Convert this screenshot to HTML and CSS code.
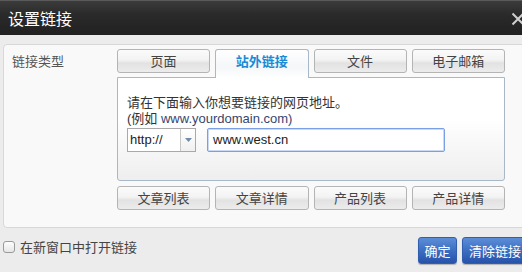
FILE: index.html
```html
<!DOCTYPE html>
<html lang="zh">
<head>
<meta charset="utf-8">
<link rel="stylesheet" href="styles.css">
</head>
<body>
<div class="dialog">
  <div class="titlebar">
    <span class="title">设置链接</span>
    <svg class="close" width="14" height="14" viewBox="0 0 14 14"><path d="M1.5 1.5 L12.5 12.5 M12.5 1.5 L1.5 12.5" stroke="#d0d0d0" stroke-width="2"/></svg>
  </div>
  <div class="main">
    <div class="panel">
      <div class="label">链接类型</div>
      <div class="area">
        <div class="tabs">
          <div class="tab">页面</div>
          <div class="tab active">站外链接</div>
          <div class="tab">文件</div>
          <div class="tab">电子邮箱</div>
        </div>
        <div class="content">
          <div class="line">请在下面输入你想要链接的网页地址。</div>
          <div class="line">(例如 <span class="url">www.yourdomain.com)</span></div>
          <div class="fields">
            <div class="select">
              <span class="sel-text">http://</span>
              <span class="sel-btn"><svg width="7" height="4" viewBox="0 0 7 4"><path d="M0 0 H7 L3.5 4 Z" fill="#6f8cad"/></svg></span>
            </div>
            <div class="input">www.west.cn</div>
          </div>
        </div>
        <div class="quick">
          <div class="btn">文章列表</div>
          <div class="btn">文章详情</div>
          <div class="btn">产品列表</div>
          <div class="btn">产品详情</div>
        </div>
      </div>
    </div>
    <div class="footer">
      <label class="check"><span class="box"></span>在新窗口中打开链接</label>
      <div class="actions">
        <div class="primary ok">确定</div>
        <div class="primary clear">清除链接</div>
      </div>
    </div>
  </div>
</div>
</body>
</html>
```
FILE: styles.css
```css
html, body {
  margin: 0;
  padding: 0;
}
body {
  width: 522px;
  height: 272px;
  overflow: hidden;
  background: #ececec;
  font-family: "Liberation Sans", Arial, "Noto Sans CJK SC", sans-serif;
  font-size: 13px;
  color: #444;
}
.dialog {
  width: 522px;
  height: 272px;
  display: flex;
  flex-direction: column;
}
.titlebar {
  height: 35px;
  flex: none;
  display: flex;
  align-items: center;
  justify-content: space-between;
  padding-left: 8px;
  background: linear-gradient(#3b3b3b, #2a2a2a 40%, #212121);
  border-top: 1px solid #5a5a5a;
  box-sizing: border-box;
}
.title {
  color: #fff;
  font-size: 16px;
  font-family: "Noto Sans CJK SC", sans-serif;
  line-height: 20px;
}
.close {
  margin-right: -3px;
  margin-top: 1px;
}
.main {
  flex: 1;
  display: flex;
  flex-direction: column;
  padding: 9px 0 0 3px;
}
.panel {
  height: 184px;
  box-sizing: border-box;
  margin-right: -10px;
  border: 1px solid #d8d8d8;
  border-radius: 4px;
  background: #f9f9f9;
  display: flex;
  padding: 4px 0 0 8px;
}
.label {
  width: 105px;
  padding-top: 4px;
  line-height: 16px;
  font-family: "Noto Sans CJK SC", sans-serif;
  color: #555;
}
.area {
  width: 388px;
  display: flex;
  flex-direction: column;
}
.tabs {
  height: 28px;
  display: flex;
  gap: 5px;
  align-items: flex-start;
}
.tab, .btn {
  flex: 1;
  height: 24px;
  box-sizing: border-box;
  border: 1px solid #b4b4b4;
  border-radius: 3px;
  background: linear-gradient(#fbfbfb, #f3f3f3 45%, #e2e2e2 60%, #ececec);
  text-align: center;
  line-height: 22px;
  font-family: "Noto Sans CJK SC", sans-serif;
  color: #444;
}
.tab.active {
  position: relative;
  z-index: 1;
  height: 29px;
  border-color: #a8b8c8;
  border-bottom: none;
  border-radius: 3px 3px 0 0;
  background: linear-gradient(#ffffff, #f4f6f8 60%, #ffffff);
  color: #1a8ad4;
  font-weight: bold;
}
.content {
  height: 104px;
  box-sizing: border-box;
  border: 1px solid #a8b8c8;
  border-radius: 0 0 3px 3px;
  background: linear-gradient(#ffffff 40%, #eeeeee);
  padding: 17px 0 0 9px;
}
.line {
  line-height: 16px;
  color: #333;
  font-family: "Liberation Sans", Arial, "Noto Sans CJK SC", sans-serif;
}
.url {
  color: #36466e;
}
.fields {
  display: flex;
  gap: 11px;
  margin-top: 1px;
}
.select {
  width: 69px;
  height: 24px;
  box-sizing: border-box;
  border: 1px solid #a9a9a9;
  background: #fff;
  display: flex;
}
.sel-text {
  flex: 1;
  padding-left: 2px;
  line-height: 22px;
  color: #222;
}
.sel-btn {
  width: 14px;
  border-left: 1px solid #c8c8c8;
  display: flex;
  align-items: center;
  justify-content: center;
  background: linear-gradient(#fff, #f0f0f0);
}
.input {
  width: 238px;
  height: 24px;
  box-sizing: border-box;
  border: 1px solid #7a9fe4;
  border-radius: 2px;
  box-shadow: inset 0 0 0 1px #c9d9f6;
  background: #fff;
  padding-left: 5px;
  line-height: 22px;
  color: #222;
}
.quick {
  display: flex;
  gap: 5px;
  margin-top: 5px;
}
.footer {
  display: flex;
  justify-content: space-between;
  align-items: flex-start;
  padding-top: 9px;
}
.check {
  display: flex;
  align-items: center;
  gap: 5px;
  margin-top: 2px;
  font-family: "Noto Sans CJK SC", sans-serif;
  color: #444;
  line-height: 16px;
}
.box {
  width: 12px;
  height: 12px;
  box-sizing: border-box;
  border: 1px solid #9a9a9a;
  border-radius: 3px;
  background: linear-gradient(#fdfdfd, #e6e6e6);
}
.actions {
  display: flex;
  gap: 5px;
  margin-right: -6px;
}
.primary {
  height: 27px;
  box-sizing: border-box;
  border: 1px solid #2f5fae;
  border-radius: 3px;
  background: linear-gradient(#5b8ed8, #3d6ec2 50%, #2752aa);
  color: #fff;
  line-height: 25px;
  text-align: center;
  font-family: "Noto Sans CJK SC", sans-serif;
  box-shadow: 0 1px 1px rgba(0,0,0,0.25);
}
.ok {
  width: 39px;
}
.clear {
  width: 66px;
}
```
